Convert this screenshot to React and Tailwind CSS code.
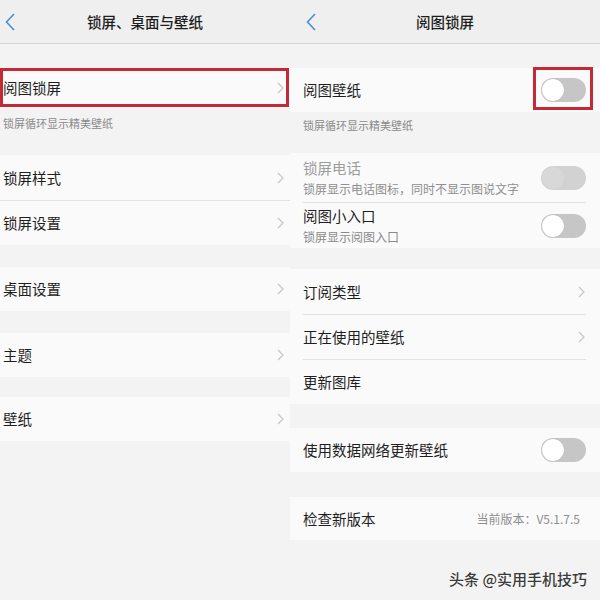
import React from "react";

const FONT = { fontFamily: '"Noto Sans CJK SC", "Noto Sans", sans-serif' };

function Chevron() {
  return (
    <svg width="7" height="12" viewBox="0 0 7 12" className="shrink-0">
      <polyline points="1,1 6,6 1,11" fill="none" stroke="#c6c6c6" strokeWidth="1.2" />
    </svg>
  );
}

function Back() {
  return (
    <svg width="10" height="18" viewBox="0 0 10 18" className="shrink-0">
      <polyline points="9,1 1.5,9 9,17" fill="none" stroke="#4a8fd3" strokeWidth="1.6" />
    </svg>
  );
}

function Toggle({ disabled }) {
  return (
    <div
      className={
        "w-[45px] h-[24px] rounded-full flex items-center pl-[1px] shrink-0 " +
        (disabled ? "bg-[#d2d2d2]" : "bg-[#c6c6c6]")
      }
    >
      <div
        className={
          "w-[22px] h-[22px] rounded-full " +
          (disabled ? "bg-[#d8d8d8]" : "bg-white shadow-[0_0_1px_#9a9a9a]")
        }
      />
    </div>
  );
}

function Header({ title, backPad }) {
  return (
    <div className={"relative h-[44px] bg-[#efefef] border-b border-[#d6d6d6] flex items-center " + backPad}>
      <Back />
      <div className="absolute inset-0 flex items-center justify-center text-[14.5px] font-medium text-[#1e1e1e]">
        {title}
      </div>
    </div>
  );
}

function LRow({ label, h = "h-[44px]" }) {
  return (
    <div className={"bg-[#fafafa] flex items-center justify-between pl-[3px] pr-[6px] " + h}>
      <span className="text-[14.5px] text-[#1e1e1e]">{label}</span>
      <Chevron />
    </div>
  );
}

function RRow({ label, right, h = "h-[44px]" }) {
  return (
    <div className={"bg-[#fafafa] flex items-center justify-between pl-[13px] pr-[14px] " + h}>
      <span className="text-[14.5px] text-[#1e1e1e]">{label}</span>
      {right}
    </div>
  );
}

export default function App() {
  return (
    <div className="relative w-[600px] h-[600px] bg-[#f3f3f3] flex overflow-hidden" style={FONT}>
      {/* Left screen */}
      <div className="w-[290px] flex flex-col">
        <Header title="锁屏、桌面与壁纸" backPad="pl-[5px]" />
        <div className="h-[24px]" />
        <div className="relative h-[40px] bg-[#fafafa] flex items-center justify-between pl-[3px] pr-[6px]">
          <span className="text-[14.5px] text-[#1e1e1e]">阅图锁屏</span>
          <Chevron />
          <div className="absolute left-0 top-0 w-[289px] h-[39px] border-[3px] border-[#c42a36]" />
        </div>
        <div className="h-[47px] pl-[3px] pt-[7px] text-[11px] leading-[16px] text-[#8a8a8a]">锁屏循环显示精美壁纸</div>
        <LRow label="锁屏样式" h="h-[45px]" />
        <div className="h-px bg-[#e2e2e2]" />
        <LRow label="锁屏设置" />
        <div className="h-[22px]" />
        <LRow label="桌面设置" />
        <div className="h-[22px]" />
        <LRow label="主题" />
        <div className="h-[20px]" />
        <LRow label="壁纸" />
      </div>

      {/* Right screen */}
      <div className="w-[310px] flex flex-col">
        <Header title="阅图锁屏" backPad="pl-[16px]" />
        <div className="h-[24px]" />
        <div className="relative h-[44px] bg-[#fafafa] flex items-center justify-between pl-[13px] pr-[14px]">
          <span className="text-[14.5px] text-[#1e1e1e]">阅图壁纸</span>
          <Toggle />
          <div className="absolute left-[243px] top-[-1px] w-[60px] h-[43px] border-[3px] border-[#c42a36]" />
        </div>
        <div className="h-[41px] pl-[13px] pt-[5px] text-[11px] leading-[16px] text-[#8a8a8a]">锁屏循环显示精美壁纸</div>
        <div className="bg-[#fafafa]">
          <div className="h-[49px] flex items-center justify-between pl-[13px] pr-[14px]">
            <div className="flex flex-col">
              <span className="text-[14.5px] leading-[22px] text-[#9c9c9c]">锁屏电话</span>
              <span className="text-[12px] leading-[20px] text-[#8f8f8f]">锁屏显示电话图标，同时不显示图说文字</span>
            </div>
            <Toggle disabled />
          </div>
          <div className="h-px bg-[#e2e2e2] ml-[13px] mr-[14px]" />
          <div className="h-[45px] flex items-center justify-between pl-[13px] pr-[14px]">
            <div className="flex flex-col">
              <span className="text-[14.5px] leading-[22px] text-[#1e1e1e]">阅图小入口</span>
              <span className="text-[12px] leading-[20px] text-[#8a8a8a]">锁屏显示阅图入口</span>
            </div>
            <Toggle />
          </div>
        </div>
        <div className="h-[21px]" />
        <div className="bg-[#fafafa]">
          <RRow label="订阅类型" h="h-[45px]" right={<span className="pr-[1px]"><Chevron /></span>} />
          <div className="h-px bg-[#e2e2e2] ml-[13px] mr-[14px]" />
          <RRow label="正在使用的壁纸" right={<span className="pr-[1px]"><Chevron /></span>} />
          <div className="h-px bg-[#e2e2e2] ml-[13px] mr-[14px]" />
          <RRow label="更新图库" right={null} />
        </div>
        <div className="h-[24px]" />
        <RRow label="使用数据网络更新壁纸" right={<Toggle />} />
        <div className="h-[25px]" />
        <RRow
          label="检查新版本"
          h="h-[43px]"
          right={<span className="text-[12px] text-[#8e8e8e] pr-[6px]">当前版本：V5.1.7.5</span>}
        />
      </div>

      <div className="absolute right-[13px] bottom-[13px] text-[15px] leading-[16px] font-medium text-[#3a3a3a] [text-shadow:0_0_2px_#ffffff]">
        头条 @实用手机技巧
      </div>
    </div>
  );
}
